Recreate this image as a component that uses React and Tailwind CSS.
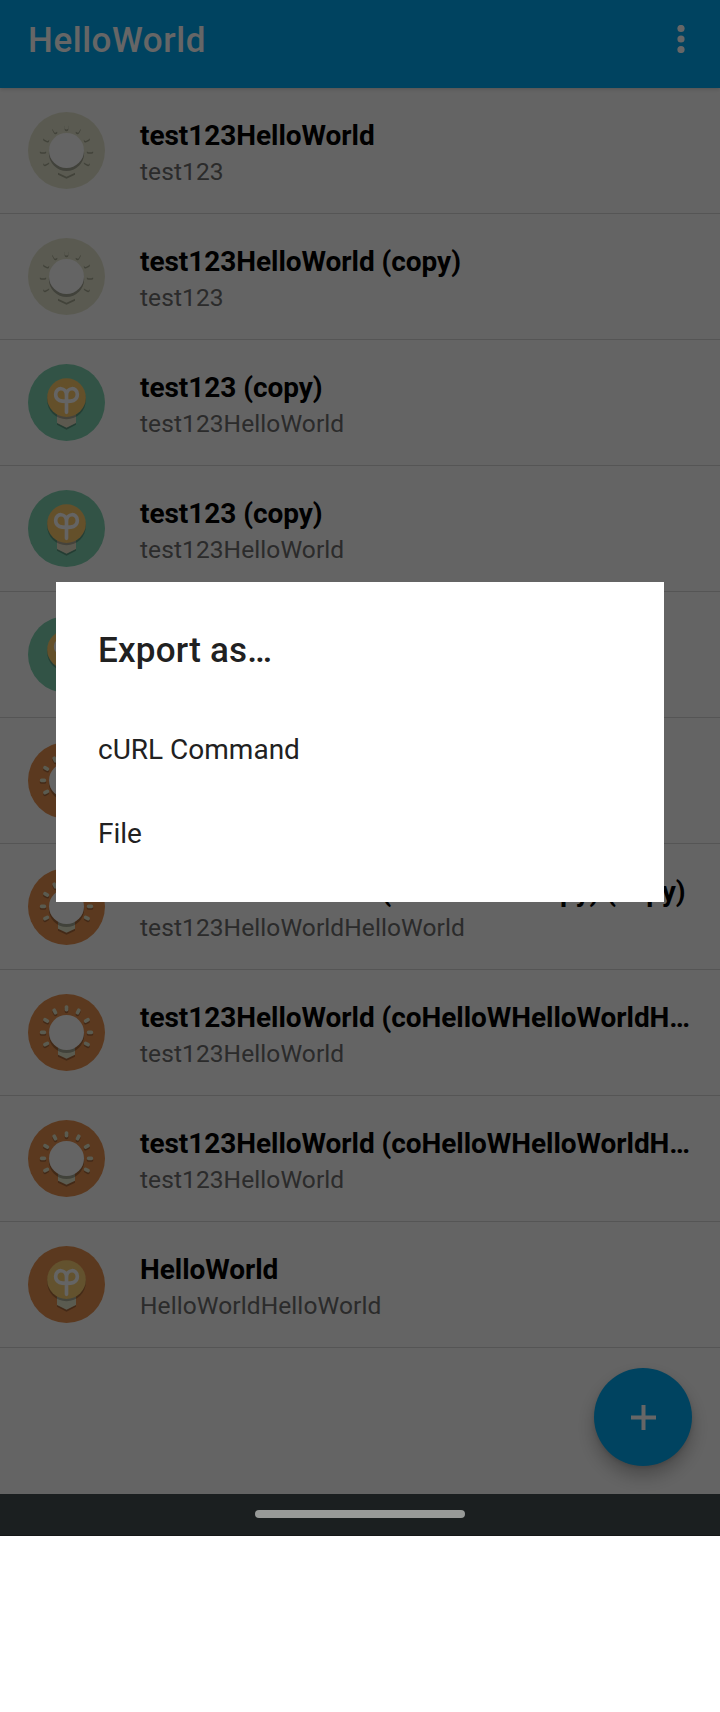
import React from "react";

const RAYS = [
  [115.5, 43, 90],
  [80.5, 52.5, 62],
  [150.5, 52.5, -62],
  [54.5, 79, 28],
  [176.5, 79, -28],
  [45, 115, 0],
  [186, 115, 0],
  [54.5, 150, -28],
  [176.5, 150, 28],
];

function Rays({ fill, dy = 0 }) {
  return RAYS.map(([x, y, a]) => (
    <rect key={`${x}-${y}`} x={x - 9.5} y={y + dy - 5.5} width="19" height="11" rx="5" fill={fill} transform={`rotate(${a} ${x} ${y + dy})`} />
  ));
}

function RayIcon({ bg, shade, ray }) {
  return (
    <svg className="size-[77px] shrink-0" viewBox="0 0 231 231">
      <circle cx="115.5" cy="115.5" r="115.5" fill={bg} />
      <Rays fill={shade} dy={5} />
      <Rays fill={ray} />
      <path d="M90 160H141V188L115.5 200L90 188Z" fill={shade} />
      <path d="M90 160H141V182L115.5 194L90 182Z" fill={ray} />
      <circle cx="115.5" cy="124" r="53" fill="#000000" fillOpacity="0.27" />
      <circle cx="115.5" cy="115.5" r="52.5" fill="#fafafa" />
    </svg>
  );
}

function PlantIcon({ bg, shade, bulb, base }) {
  return (
    <svg className="size-[77px] shrink-0" viewBox="0 0 231 231">
      <circle cx="115.5" cy="115.5" r="115.5" fill={bg} />
      <path d="M87 150H144V182L115.5 197L87 182Z" fill={shade} />
      <path d="M87 150H144V177L115.5 191L87 177Z" fill={base} />
      <circle cx="115.5" cy="108" r="58" fill="#000000" fillOpacity="0.25" />
      <circle cx="115.5" cy="101" r="58" fill={bulb} />
      <path
        d="M115.5 145V94C115.5 68 83 68 83 91C83 112 103 112 115.5 112C128 112 148 112 148 91C148 68 115.5 68 115.5 94"
        fill="none"
        stroke="#fafafa"
        strokeWidth="11"
        strokeLinecap="round"
        strokeLinejoin="round"
      />
    </svg>
  );
}

const ICONS = {
  grey: <RayIcon bg="#e1e2cb" shade="#a6a792" ray="#e1e2cb" />,
  orangeRay: <RayIcon bg="#e48f4e" shade="#a8683a" ray="#e0e3c8" />,
  green: <PlantIcon bg="#7dd0af" shade="#5a9880" bulb="#fac86a" base="#e6dfc6" />,
  orange: <PlantIcon bg="#e48f4e" shade="#a8683a" bulb="#f7ce73" base="#e0e3c8" />,
};

const ITEMS = [
  ["grey", "test123HelloWorld", "test123"],
  ["grey", "test123HelloWorld (copy)", "test123"],
  ["green", "test123 (copy)", "test123HelloWorld"],
  ["green", "test123 (copy)", "test123HelloWorld"],
  ["green", "", ""],
  ["orangeRay", "", ""],
  ["orangeRay", "test123HelloWorld (coHelloWorldpy) (copy)", "test123HelloWorldHelloWorld"],
  ["orangeRay", "test123HelloWorld (coHelloWHelloWorldH…", "test123HelloWorld"],
  ["orangeRay", "test123HelloWorld (coHelloWHelloWorldH…", "test123HelloWorld"],
  ["orange", "HelloWorld", "HelloWorldHelloWorld"],
];

function Row({ icon, title, subtitle }) {
  return (
    <li className="flex h-[126px] items-start gap-[35px] border-b border-[#d4d4d4] pt-6 pl-7">
      {ICONS[icon]}
      <div className="flex flex-col whitespace-nowrap pt-1.5">
        <span className="text-[28px] leading-[36px] font-bold tracking-[-0.05px] text-black">{title}</span>
        <span className="text-[24.5px] leading-[36px] tracking-[0.09px] text-[#6c6c6c]">{subtitle}</span>
      </div>
    </li>
  );
}

export default function App() {
  return (
    <div className="h-[1712px] w-[720px] overflow-hidden bg-white font-['Roboto',sans-serif]">
      <div className="relative h-[1494px] bg-[#fafafa]">
        <header className="relative flex h-22 items-center justify-between bg-[#00a8f0] pr-[34px] pb-[10px] pl-7 shadow-[0_1px_4px_rgba(0,0,0,0.18)]">
          <h1 className="pt-[3px] text-[35px] leading-10 font-medium tracking-[0.55px] text-white">HelloWorld</h1>
          <svg className="h-[28px] w-[10px]" viewBox="0 0 10 28" fill="#ffffff">
            <circle cx="5" cy="3.5" r="3.6" />
            <circle cx="5" cy="14" r="3.6" />
            <circle cx="5" cy="24.5" r="3.6" />
          </svg>
        </header>
        <ul>
          {ITEMS.map(([icon, title, subtitle], i) => (
            <Row key={i} icon={icon} title={title} subtitle={subtitle} />
          ))}
        </ul>
        <button className="absolute right-7 bottom-7 flex size-[98px] items-center justify-center rounded-full bg-[#00a8f0] shadow-[0_10px_18px_rgba(0,0,0,0.26),0_2px_4px_rgba(0,0,0,0.12)]">
          <svg className="size-[25px]" viewBox="0 0 25 25" fill="#ffffff">
            <path d="M10.5 0h4v10.5H25v4H14.5V25h-4V14.5H0v-4h10.5z" />
          </svg>
        </button>
        <div className="absolute inset-0 bg-black/60" />
        <section className="absolute top-[582px] left-14 flex h-80 w-[608px] flex-col bg-white pt-[47px] pl-[42px] text-[#212121]">
          <h2 className="mb-[35px] text-[35px] leading-[44px] font-medium tracking-[0.2px]">Export as…</h2>
          <div className="flex h-21 items-center text-[28px]">cURL Command</div>
          <div className="flex h-21 items-center text-[28px]">File</div>
        </section>
      </div>
      <div className="flex h-[42px] justify-center border-b border-[#141617] bg-[#1b1f20] pt-4">
        <div className="h-2 w-[210px] rounded-full bg-[#989a98]" />
      </div>
    </div>
  );
}
